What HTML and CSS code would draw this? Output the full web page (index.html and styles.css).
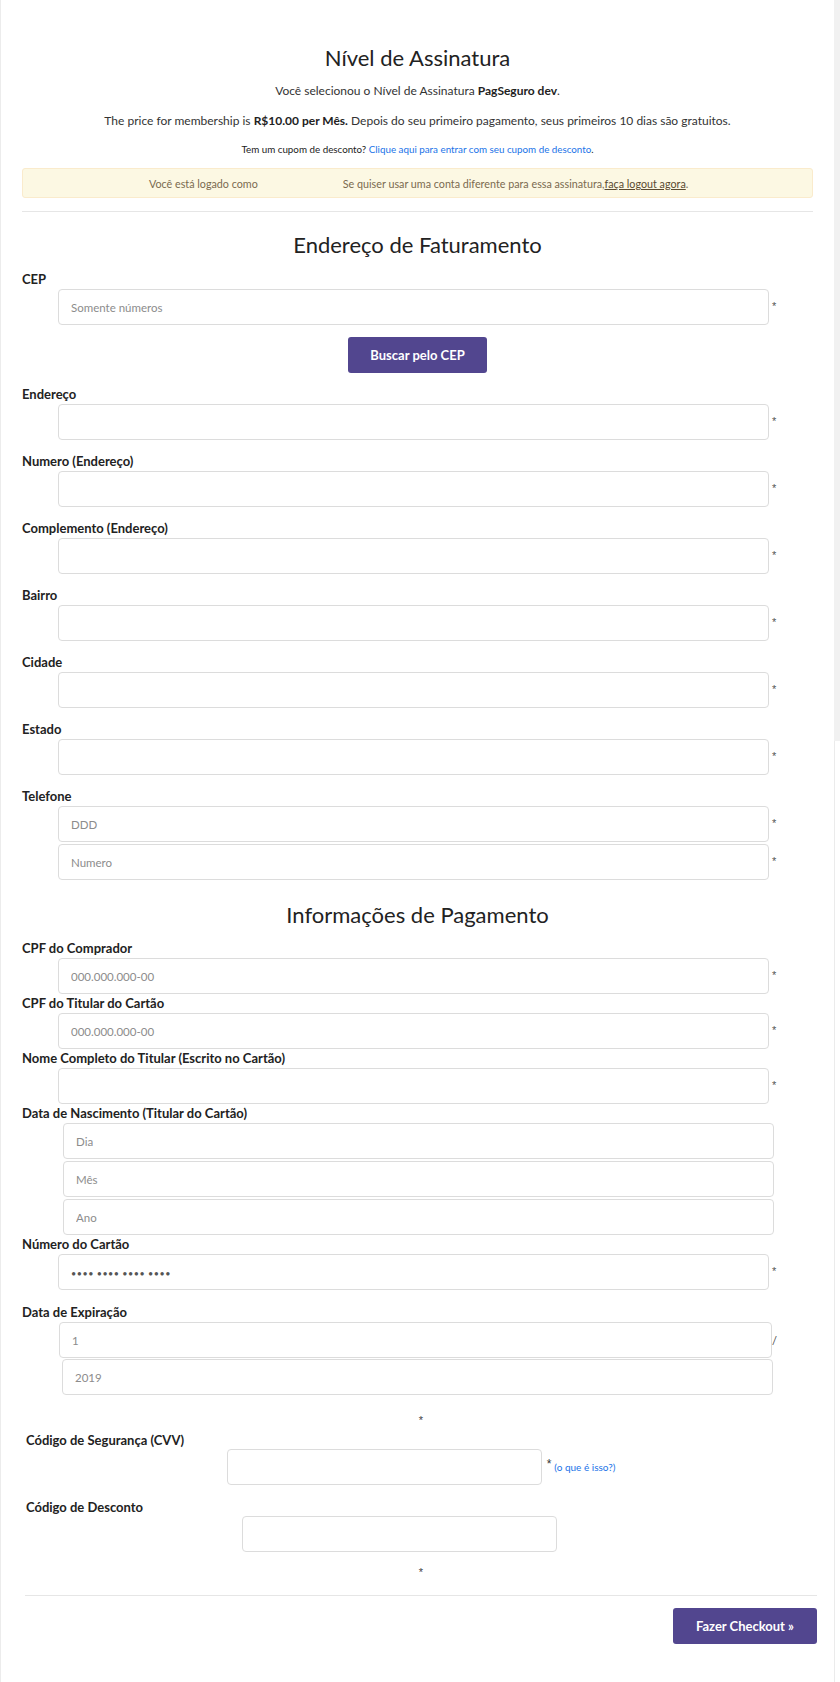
FILE: index.html
```html
<!DOCTYPE html>
<html lang="pt-BR">
<head>
<meta charset="utf-8">
<title>Checkout</title>
<link rel="stylesheet" href="styles.css">
</head>
<body>
<div class="page">
  <section class="level">
    <h2 class="heading heading-first">Nível de Assinatura</h2>
    <p class="lead">Você selecionou o Nível de Assinatura <strong>PagSeguro dev</strong>.</p>
    <p class="lead">The price for membership is <strong>R$10.00 per Mês.</strong> Depois do seu primeiro pagamento, seus primeiros 10 dias são gratuitos.</p>
    <p class="coupon">Tem um cupom de desconto? <a class="link" href="#">Clique aqui para entrar com seu cupom de desconto</a>.</p>
    <div class="notice">
      <span class="notice-user">Você está logado como</span>
      <span class="notice-switch">Se quiser usar uma conta diferente para essa assinatura,<a class="notice-link" href="#">faça logout agora</a>.</span>
    </div>
  </section>

  <hr class="divider">

  <section class="billing">
    <h2 class="heading">Endereço de Faturamento</h2>
    <div class="field">
      <label class="label">CEP</label>
      <div class="row"><input class="input" type="text" placeholder="Somente números"><span class="req">*</span></div>
    </div>
    <div class="center-row"><button class="btn btn-cep" type="button">Buscar pelo CEP</button></div>

    <div class="field spaced">
      <label class="label">Endereço</label>
      <div class="row"><input class="input" type="text"><span class="req">*</span></div>
    </div>
    <div class="field spaced">
      <label class="label">Numero (Endereço)</label>
      <div class="row"><input class="input" type="text"><span class="req">*</span></div>
    </div>
    <div class="field spaced">
      <label class="label">Complemento (Endereço)</label>
      <div class="row"><input class="input" type="text"><span class="req">*</span></div>
    </div>
    <div class="field spaced">
      <label class="label">Bairro</label>
      <div class="row"><input class="input" type="text"><span class="req">*</span></div>
    </div>
    <div class="field spaced">
      <label class="label">Cidade</label>
      <div class="row"><input class="input" type="text"><span class="req">*</span></div>
    </div>
    <div class="field spaced">
      <label class="label">Estado</label>
      <div class="row"><input class="input" type="text"><span class="req">*</span></div>
    </div>
    <div class="field spaced">
      <label class="label">Telefone</label>
      <div class="row"><input class="input" type="text" placeholder="DDD"><span class="req">*</span></div>
      <div class="row row-stack"><input class="input" type="text" placeholder="Numero"><span class="req">*</span></div>
    </div>
  </section>

  <section class="payment">
    <h2 class="heading">Informações de Pagamento</h2>
    <div class="field">
      <label class="label">CPF do Comprador</label>
      <div class="row"><input class="input" type="text" placeholder="000.000.000-00"><span class="req">*</span></div>
    </div>
    <div class="field">
      <label class="label">CPF do Titular do Cartão</label>
      <div class="row"><input class="input" type="text" placeholder="000.000.000-00"><span class="req">*</span></div>
    </div>
    <div class="field">
      <label class="label">Nome Completo do Titular (Escrito no Cartão)</label>
      <div class="row"><input class="input" type="text"><span class="req">*</span></div>
    </div>
    <div class="field">
      <label class="label">Data de Nascimento (Titular do Cartão)</label>
      <div class="row row-birth"><input class="input" type="text" placeholder="Dia"></div>
      <div class="row row-birth row-stack"><input class="input" type="text" placeholder="Mês"></div>
      <div class="row row-birth row-stack"><input class="input" type="text" placeholder="Ano"></div>
    </div>
    <div class="field">
      <label class="label">Número do Cartão</label>
      <div class="row"><input class="input input-card" type="text" placeholder="•••• •••• •••• ••••"><span class="req">*</span></div>
    </div>
    <div class="field spaced-card">
      <label class="label">Data de Expiração</label>
      <div class="row row-month"><select class="input select"><option>1</option></select><span class="slash">/</span></div>
      <div class="row row-year"><select class="input select"><option>2019</option></select></div>
    </div>
  </section>

  <section class="extra">
    <p class="star star-top">*</p>
    <div class="field">
      <label class="label label-extra">Código de Segurança (CVV)</label>
      <div class="center-row">
        <input class="input input-short" type="text"><span class="req-inline">*</span><a class="what" href="#">(o que é isso?)</a>
      </div>
    </div>
    <div class="field spaced-discount">
      <label class="label label-extra">Código de Desconto</label>
      <div class="center-row">
        <input class="input input-short" type="text"><span class="spacer"></span>
      </div>
    </div>
    <p class="star star-bottom">*</p>
    <hr class="divider divider-bottom">
    <div class="submit-row"><button class="btn btn-submit" type="button">Fazer Checkout »</button></div>
  </section>
</div>
</body>
</html>
```

FILE: styles.css
```css
html, body {
  margin: 0;
  padding: 0;
}

body {
  font-family: Lato, "Open Sans", "Liberation Sans", sans-serif;
  color: #333;
  min-height: 1682px;
  background:
    linear-gradient(#ececec, #ececec) 0 0 / 1px 100% no-repeat,
    linear-gradient(#f1f1f1, #f1f1f1) 834px 0 / 6px 741px no-repeat,
    linear-gradient(#ebebeb, #ebebeb) 834px 741px / 1px 100% no-repeat,
    #fff;
}

.page {
  padding: 45px 27px 37px 22px;
}

.heading {
  margin: 0 0 12px;
  font-size: 22px;
  line-height: 26px;
  font-weight: 400;
  color: #222;
  text-align: center;
}

.heading-first {
  margin-bottom: 11px;
}

.lead {
  margin: 0 0 12px;
  font-size: 12px;
  line-height: 18px;
  text-align: center;
  color: #333;
}

.lead strong {
  font-weight: 700;
  color: #222;
}

.coupon {
  margin: 0 0 12px;
  font-size: 9.8px;
  line-height: 14px;
  text-align: center;
  color: #222;
}

.link {
  color: #1a73e8;
  text-decoration: none;
}

.notice {
  box-sizing: border-box;
  height: 30px;
  display: flex;
  align-items: center;
  padding-left: 126px;
  background: #fcf8e3;
  border: 1px solid #faebcc;
  border-radius: 3px;
  font-size: 10.75px;
  color: #7a6a4f;
}

.notice-switch {
  margin-left: 85px;
}

.notice-link {
  color: #5a4a30;
  text-decoration: underline;
}

.divider {
  margin: 13px 0 20px;
  border: 0;
  border-top: 1px solid #e6e6e6;
  height: 0;
}

.label {
  display: block;
  font-size: 13px;
  line-height: 18px;
  font-weight: 700;
  color: #222;
  margin-bottom: 1px;
}

.field.spaced {
  margin-top: 12px;
}

.billing .field.spaced:first-of-type {
  margin-top: 11px;
}

.row {
  display: flex;
  align-items: center;
  padding-left: 36px;
}

.row-stack {
  margin-top: 2px;
}

.input {
  box-sizing: border-box;
  width: 711px;
  height: 36px;
  padding: 0 12px;
  border: 1px solid #dcdcdc;
  border-radius: 4px;
  background: #fff;
  font-family: Lato, "Open Sans", sans-serif;
  font-size: 11.5px;
  color: #555;
  outline: none;
}

.input::placeholder {
  color: #8c8c8c;
}

.input-card::placeholder {
  color: #555;
  font-size: 9px;
  letter-spacing: 0.5px;
}

.req {
  margin-left: 3px;
  margin-top: -3px;
  font-family: "Liberation Sans", Arial, sans-serif;
  font-size: 11px;
  line-height: 12px;
  color: #555;
}

.center-row {
  display: flex;
  justify-content: center;
  align-items: center;
}

.btn {
  box-sizing: border-box;
  height: 36px;
  border: 0;
  border-radius: 3px;
  background: #52468f;
  color: #fff;
  font-family: Lato, "Open Sans", sans-serif;
  font-size: 13px;
  font-weight: 700;
  cursor: pointer;
}

.btn-cep {
  width: 139px;
  margin: 12px 0 0;
}

.payment {
  margin-top: 22px;
}

.payment .heading {
  margin-bottom: 11px;
}

.row-birth {
  padding-left: 41px;
}

.row-birth.row-stack {
  margin-top: 2px;
}

.spaced-card {
  margin-top: 13px;
}

.row-month {
  padding-left: 37px;
}

.row-month .input {
  width: 713px;
}

.slash {
  margin-left: 0;
  font-size: 11px;
  color: #444;
}

.row-year {
  padding-left: 40px;
  margin-top: 1px;
}

.select {
  appearance: none;
  -webkit-appearance: none;
  color: #8c8c8c;
  font-size: 11.5px;
}

.extra {
  margin: 0 -4px 0 3px;
}

.star {
  margin: 0;
  font-family: "Liberation Sans", Arial, sans-serif;
  font-size: 11px;
  line-height: 14px;
  text-align: center;
  color: #444;
}

.star-top {
  margin-top: 18px;
  margin-bottom: 4px;
}

.label-extra {
  margin-bottom: 0;
  padding-left: 1px;
}

.input-short {
  width: 315px;
}

.req-inline {
  margin-left: 5px;
  margin-top: -6px;
  font-family: "Liberation Sans", Arial, sans-serif;
  font-size: 12px;
  color: #333;
}

.what {
  margin-left: 3px;
  font-size: 10px;
  color: #1a73e8;
  text-decoration: none;
}

.spaced-discount {
  margin-top: 13px;
}

.spacer {
  display: inline-block;
  width: 43px;
}

.star-bottom {
  margin-top: 13px;
}

.divider-bottom {
  margin: 16px 0 12px;
}

.submit-row {
  display: flex;
  justify-content: flex-end;
}

.btn-submit {
  width: 144px;
}
```
